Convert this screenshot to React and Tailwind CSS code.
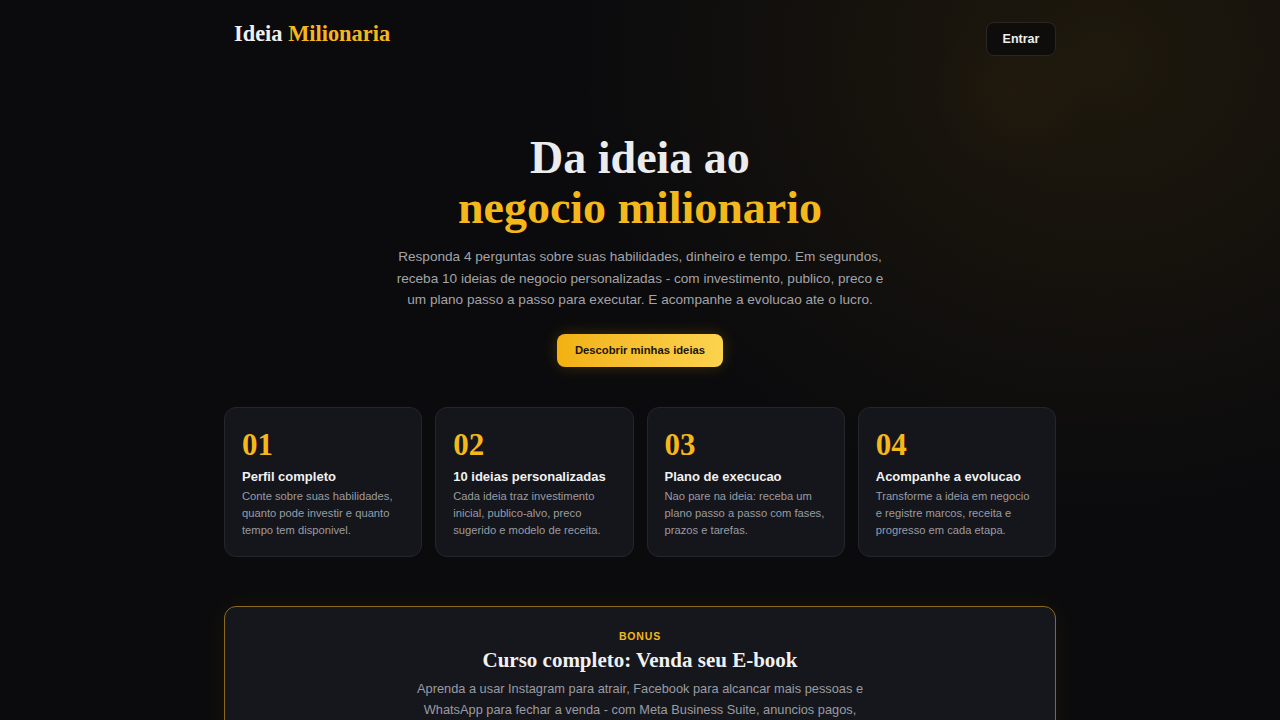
export default function App() {
  const cards = [
    { n: "01", t: "Perfil completo", d: "Conte sobre suas habilidades, quanto pode investir e quanto tempo tem disponivel." },
    { n: "02", t: "10 ideias personalizadas", d: "Cada ideia traz investimento inicial, publico-alvo, preco sugerido e modelo de receita." },
    { n: "03", t: "Plano de execucao", d: "Nao pare na ideia: receba um plano passo a passo com fases, prazos e tarefas." },
    { n: "04", t: "Acompanhe a evolucao", d: "Transforme a ideia em negocio e registre marcos, receita e progresso em cada etapa." },
  ];
  const serif = { fontFamily: '"Liberation Serif", "DejaVu Serif", serif' };
  return (
    <div
      className="min-h-screen w-full bg-[#0b0b0d] bg-[radial-gradient(circle_80px_at_1010px_95px,rgba(180,110,0,0.035),transparent_100%),radial-gradient(ellipse_750px_650px_at_1100px_60px,rgba(200,140,10,0.10),transparent_70%)] text-white overflow-hidden"
      style={{ fontFamily: '"Liberation Sans", Arial, sans-serif' }}
    >
      <div className="mx-auto w-[832px]">
        <header className="flex items-center justify-between pt-[22px]">
          <div className="pl-[10px] text-[22.4px] font-bold leading-[22px] -mt-[11px]" style={serif}>
            <span className="text-[#f1f1f1]">Ideia </span>
            <span className="text-[#f5b81b]">Milionaria</span>
          </div>
          <button className="h-[34px] w-[70px] rounded-lg border border-[#2a2622] bg-[#0f0d0b] text-[12.5px] font-bold text-[#eeeeee]">
            Entrar
          </button>
        </header>

        <section className="mt-[77px] flex flex-col items-center text-center">
          <h1 className="text-[46px] font-bold leading-[50px]" style={serif}>
            <span className="text-[#ececec]">Da ideia ao</span>
            <br />
            <span className="text-[#f5b81b]">negocio milionario</span>
          </h1>
          <p className="mt-[13px] w-[494px] text-[13.6px] leading-[21.5px] text-[#a3a3a8]">
            Responda 4 perguntas sobre suas habilidades, dinheiro e tempo. Em segundos, receba 10 ideias de negocio personalizadas - com investimento, publico, preco e um plano passo a passo para executar. E acompanhe a evolucao ate o lucro.
          </p>
          <button className="mt-[23px] h-[33px] w-[166px] rounded-lg bg-gradient-to-r from-[#f2b10e] to-[#fcd34d] text-[11.25px] font-bold text-[#1a1407] shadow-[0_0_16px_rgba(245,180,20,0.2)]">
            Descobrir minhas ideias
          </button>
        </section>

        <section className="mt-[40px] grid grid-cols-4 gap-[13px]">
          {cards.map((c) => (
            <div key={c.n} className="h-[150px] rounded-xl border border-[#25262c] bg-[#15161b] px-[17px] pt-[20px]">
              <div className="text-[31px] font-bold leading-[34px] text-[#f5b81b]" style={serif}>{c.n}</div>
              <div className="mt-[6px] text-[13px] font-bold leading-[18px] text-[#f1f1f1]">{c.t}</div>
              <p className="mt-[2.5px] text-[11.2px] leading-[17px] text-[#9b9ba2]">{c.d}</p>
            </div>
          ))}
        </section>

        <section className="mt-[49px] rounded-xl border border-[#8a6a1c] bg-[#16171c] px-[40px] pt-[22px] pb-[30px] text-center shadow-[0_0_30px_rgba(245,180,20,0.06)]">
          <div className="text-[10.5px] font-bold leading-[14px] tracking-[0.08em] text-[#f5b81b]">BONUS</div>
          <h2 className="mt-[3px] text-[21px] font-bold leading-[28px] text-[#f1f1f1]" style={serif}>
            Curso completo: Venda seu E-book
          </h2>
          <p className="mx-auto mt-[4.5px] w-[452px] text-[12.8px] leading-[21px] text-[#9b9ba2]">
            Aprenda a usar Instagram para atrair, Facebook para alcancar mais pessoas e WhatsApp para fechar a venda - com Meta Business Suite, anuncios pagos, funil de vendas e estrategias de conteudo.
          </p>
        </section>
      </div>
    </div>
  );
}
